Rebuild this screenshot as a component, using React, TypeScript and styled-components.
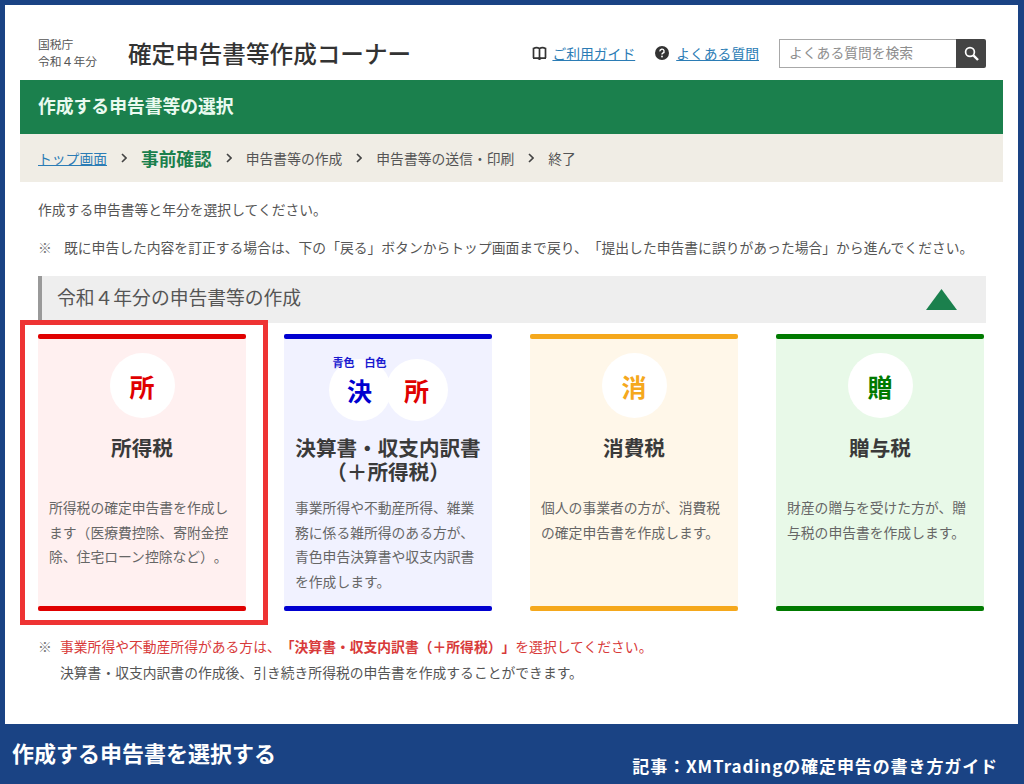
import {createGlobalStyle, styled} from 'styled-components';

const GlobalStyle = createGlobalStyle`
  html, body {
    margin: 0;
    padding: 0;
  }
  body {
    font-family: 'Noto Sans CJK JP', 'Noto Sans', sans-serif;
    color: #444;
    text-spacing-trim: space-all;
  }
  * {
    box-sizing: border-box;
  }
`;

const Frame = styled.div`
  width: 1024px;
  height: 784px;
  background: #1a4384;
  padding: 5px 6px 0 5px;
  display: flex;
  flex-direction: column;
  overflow: hidden;
`;

const Sheet = styled.main`
  height: 719px;
  background: #fff;
  padding: 0 15px;
`;

const Header = styled.header`
  height: 75px;
  padding: 0 17px 0 18px;
  display: flex;
  align-items: flex-start;
`;

const Agency = styled.div`
  width: 90px;
  padding-top: 30px;
  font-size: 11.8px;
  line-height: 17px;
  color: #555;
`;

const SiteTitle = styled.h1`
  margin: 0;
  padding-top: 31px;
  font-size: 23.6px;
  line-height: 34px;
  font-weight: 500;
  color: #333;
  white-space: nowrap;
`;

const Tools = styled.nav`
  margin-left: auto;
  padding-top: 34px;
  display: flex;
  align-items: flex-start;
  gap: 20px;
`;

const ToolLink = styled.a<{$gap: number}>`
  display: flex;
  align-items: center;
  gap: ${({$gap}) => $gap}px;
  height: 27px;
  font-size: 13.8px;
  color: #2b7cb5;
  white-space: nowrap;
  span {
    text-decoration: underline;
  }
`;

const SearchBox = styled.div`
  display: flex;
  width: 207px;
  height: 29px;
`;

const SearchInput = styled.div`
  flex: 1;
  border: 1px solid #a8a8a8;
  border-right: 0;
  padding-left: 9px;
  font-size: 13.8px;
  line-height: 25px;
  color: #8d8d8d;
`;

const SearchButton = styled.div`
  width: 30px;
  background: #444;
  display: flex;
  align-items: center;
  justify-content: center;
  border-radius: 0 2px 2px 0;
`;

const PageBar = styled.div`
  height: 54px;
  background: #1b804d;
  padding: 0 0 4px 18px;
  display: flex;
  align-items: center;
  font-size: 17.8px;
  font-weight: 700;
  color: #eafaf0;
`;

const Crumbs = styled.ol`
  list-style: none;
  margin: 0;
  height: 48px;
  background: #f0ede5;
  padding: 0 0 0 18px;
  display: flex;
  align-items: center;
  gap: 14px;
  font-size: 13.8px;
  color: #555;
`;

const CrumbLink = styled.li`
  color: #2b7cb5;
  text-decoration: underline;
`;

const CrumbNow = styled.li`
  font-size: 17.7px;
  font-weight: 700;
  color: #1b804d;
`;

const Content = styled.div`
  padding: 17px 17px 0 18px;
`;

const Para = styled.p`
  margin: 0 0 18px;
  font-size: 13.8px;
  line-height: 20px;
  color: #555;
  white-space: nowrap;
`;

const Notice = styled(Para)`
  display: flex;
  margin-bottom: 19px;
`;

const NoticeMark = styled.span`
  width: 26px;
  color: #777;
`;

const Section = styled.div`
  height: 47px;
  background: #eeeeee;
  border-left: 4px solid #999;
  padding: 0 29px 0 15px;
  display: flex;
  align-items: center;
  justify-content: space-between;
  font-size: 18.8px;
  color: #555;
`;

const SectionTitle = styled.span`
  margin-top: -6px;
`;

const Cards = styled.div`
  margin-top: 11px;
  display: grid;
  grid-template-columns: repeat(4, 208px);
  gap: 38px;
`;

const Card = styled.article<{$bg: string}>`
  position: relative;
  height: 277px;
  background: ${({$bg}) => $bg};
  display: flex;
  flex-direction: column;
`;

const Bar = styled.div<{$color: string}>`
  height: 5px;
  flex: none;
  border-radius: 2px;
  background: ${({$color}) => $color};
`;

const Highlight = styled.div`
  position: absolute;
  inset: -14px -22px -14px -18px;
  border: 5px solid #ee3333;
  pointer-events: none;
`;

const CardBody = styled.div`
  flex: 1;
  padding: 14px 11px 0;
`;

const IconArea = styled.div`
  height: 65px;
  display: flex;
  justify-content: center;
`;

const Circle = styled.div<{$color: string; $size: number}>`
  width: ${({$size}) => $size}px;
  height: ${({$size}) => $size}px;
  border-radius: 50%;
  background: #fff;
  flex: none;
  display: flex;
  align-items: center;
  justify-content: center;
  font-size: 25px;
  font-weight: 700;
  color: ${({$color}) => $color};
`;

const Pair = styled.div`
  position: relative;
  display: flex;
  margin-top: 6px;
  ${Circle} + ${Circle} {
    margin-left: -5px;
  }
`;

const PairLabels = styled.div`
  position: absolute;
  top: -3px;
  left: 4px;
  display: flex;
  gap: 10px;
  font-size: 11px;
  line-height: 12px;
  font-weight: 700;
  color: #1a1ad0;
`;

const CardTitle = styled.h2`
  margin: 17px -8px 0;
  height: 48px;
  font-size: 20.6px;
  line-height: 24px;
  font-weight: 700;
  color: #3a3a3a;
  text-align: center;
`;

const CardText = styled.p`
  margin: 12px 0 0;
  font-size: 13.8px;
  line-height: 24.7px;
  color: #666;
`;

const Notes = styled.div`
  margin-top: 22px;
  font-size: 13.8px;
  line-height: 26px;
`;

const NoteRow = styled.div`
  display: flex;
  white-space: nowrap;
`;

const NoteMark = styled.span`
  width: 22px;
  color: #777;
`;

const NoteRed = styled.span`
  color: #d83a3a;
  strong {
    font-weight: 700;
  }
`;

const NoteText = styled.span`
  color: #555;
`;

const Footer = styled.footer`
  flex: 1;
  margin: 0 -6px 0 -5px;
  padding: 13px 26px 0 12px;
  display: flex;
  justify-content: space-between;
  color: #fff;
  font-weight: 700;
`;

const FooterTitle = styled.div`
  font-size: 22px;
  line-height: 30px;
`;

const FooterSource = styled.div`
  margin-top: 17px;
  font-size: 17px;
  line-height: 24px;
  letter-spacing: 0.9px;
  white-space: nowrap;
`;

const BookIcon = () => (
  <svg width="15" height="14" viewBox="0 0 15 14" fill="none" stroke="#333" strokeWidth="1.7">
    <path d="M1.5 12V2.4c2-1 4-1 6 0 2-1 4-1 6 0V12M7.5 2.4V12M1 12.2h5l1.5 1 1.5-1h5" />
  </svg>
);

const HelpIcon = () => (
  <svg width="14" height="14" viewBox="0 0 14 14">
    <circle cx="7" cy="7" r="7" fill="#333" />
    <path d="M4.9 5.4A2.1 2.1 0 1 1 7.8 7.2c-.6.3-.8.6-.8 1.2" fill="none" stroke="#fff" strokeWidth="1.4" />
    <circle cx="7" cy="10.5" r=".9" fill="#fff" />
  </svg>
);

const SearchIcon = () => (
  <svg width="15" height="15" viewBox="0 0 15 15" fill="none" stroke="#fff">
    <circle cx="6" cy="6" r="4.4" strokeWidth="1.7" />
    <path d="M9.4 9.4 14 14" strokeWidth="2.4" />
  </svg>
);

const Chevron = () => (
  <li>
    <svg width="6" height="10" viewBox="0 0 6 10" fill="none" stroke="#444" strokeWidth="1.6" style={{display: 'block'}}>
      <path d="M1 1l4 4-4 4" />
    </svg>
  </li>
);

const Triangle = () => (
  <svg width="31" height="21" viewBox="0 0 31 21">
    <path d="M15.5 0 31 21H0z" fill="#1b804d" />
  </svg>
);

const cards = [
  {
    bg: '#fff0f0',
    color: '#e00000',
    title: '所得税',
    text: '所得税の確定申告書を作成します（医療費控除、寄附金控除、住宅ローン控除など）。',
    glyph: '所',
    picked: true,
  },
  {
    bg: '#f1f2ff',
    color: '#0000d0',
    title: '決算書・収支内訳書（＋所得税）',
    text: '事業所得や不動産所得、雑業務に係る雑所得のある方が、青色申告決算書や収支内訳書を作成します。',
    glyph: '',
  },
  {
    bg: '#fff7e9',
    color: '#f5a81c',
    title: '消費税',
    text: '個人の事業者の方が、消費税の確定申告書を作成します。',
    glyph: '消',
  },
  {
    bg: '#e8f9e8',
    color: '#007a00',
    title: '贈与税',
    text: '財産の贈与を受けた方が、贈与税の申告書を作成します。',
    glyph: '贈',
  },
];

export default function App() {
  return (
    <>
      <GlobalStyle />
      <Frame>
        <Sheet>
          <Header>
            <Agency>
              国税庁
              <br />
              令和４年分
            </Agency>
            <SiteTitle>確定申告書等作成コーナー</SiteTitle>
            <Tools>
              <ToolLink $gap={5}>
                <BookIcon />
                <span>ご利用ガイド</span>
              </ToolLink>
              <ToolLink $gap={7}>
                <HelpIcon />
                <span>よくある質問</span>
              </ToolLink>
              <SearchBox>
                <SearchInput>よくある質問を検索</SearchInput>
                <SearchButton>
                  <SearchIcon />
                </SearchButton>
              </SearchBox>
            </Tools>
          </Header>
          <PageBar>作成する申告書等の選択</PageBar>
          <Crumbs>
            <CrumbLink>トップ画面</CrumbLink>
            <Chevron />
            <CrumbNow>事前確認</CrumbNow>
            <Chevron />
            <li>申告書等の作成</li>
            <Chevron />
            <li>申告書等の送信・印刷</li>
            <Chevron />
            <li>終了</li>
          </Crumbs>
          <Content>
            <Para>作成する申告書等と年分を選択してください。</Para>
            <Notice>
              <NoticeMark>※</NoticeMark>
              <span>既に申告した内容を訂正する場合は、下の「戻る」ボタンからトップ画面まで戻り、「提出した申告書に誤りがあった場合」から進んでください。</span>
            </Notice>
            <Section>
              <SectionTitle>令和４年分の申告書等の作成</SectionTitle>
              <Triangle />
            </Section>
            <Cards>
              {cards.map((card) => (
                <Card key={card.title} $bg={card.bg}>
                  <Bar $color={card.color} />
                  <CardBody>
                    <IconArea>
                      {card.glyph ? (
                        <Circle $color={card.color} $size={65}>
                          {card.glyph}
                        </Circle>
                      ) : (
                        <Pair>
                          <PairLabels>
                            <span>青色</span>
                            <span>白色</span>
                          </PairLabels>
                          <Circle $color="#0000d0" $size={62}>
                            決
                          </Circle>
                          <Circle $color="#e00000" $size={62}>
                            所
                          </Circle>
                        </Pair>
                      )}
                    </IconArea>
                    <CardTitle>{card.title}</CardTitle>
                    <CardText>{card.text}</CardText>
                  </CardBody>
                  <Bar $color={card.color} />
                  {card.picked && <Highlight />}
                </Card>
              ))}
            </Cards>
            <Notes>
              <NoteRow>
                <NoteMark>※</NoteMark>
                <NoteRed>
                  事業所得や不動産所得がある方は、<strong>「決算書・収支内訳書（＋所得税）」</strong>を選択してください。
                </NoteRed>
              </NoteRow>
              <NoteRow>
                <NoteMark />
                <NoteText>決算書・収支内訳書の作成後、引き続き所得税の申告書を作成することができます。</NoteText>
              </NoteRow>
            </Notes>
          </Content>
        </Sheet>
        <Footer>
          <FooterTitle>作成する申告書を選択する</FooterTitle>
          <FooterSource>記事：XMTradingの確定申告の書き方ガイド</FooterSource>
        </Footer>
      </Frame>
    </>
  );
}
